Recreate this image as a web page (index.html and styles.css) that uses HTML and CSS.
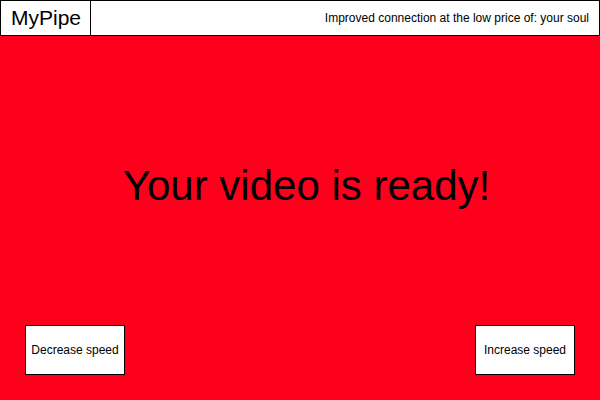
FILE: index.html
```html
<!DOCTYPE html>
<html>
<head>
<meta charset="utf-8">
<link rel="stylesheet" href="styles.css">
</head>
<body>
<div class="page">
  <header class="header">
    <div class="logo">MyPipe</div>
    <div class="tagline">Improved connection at the low price of: your soul</div>
  </header>
  <main class="stage">
    <h1 class="headline">Your video is ready!</h1>
    <div class="controls">
      <button class="btn">Decrease speed</button>
      <button class="btn">Increase speed</button>
    </div>
  </main>
</div>
</body>
</html>
```
FILE: styles.css
```css
html, body {
  margin: 0;
  padding: 0;
}
body {
  font-family: "Liberation Sans", Arial, sans-serif;
  width: 600px;
  height: 400px;
  overflow: hidden;
}
.page {
  display: flex;
  flex-direction: column;
  height: 400px;
}
.header {
  display: flex;
  align-items: stretch;
  height: 36px;
  box-sizing: border-box;
  border: 1px solid #000;
  background: #fff;
}
.logo {
  width: 90px;
  box-sizing: border-box;
  border-right: 1px solid #000;
  padding-left: 10px;
  font-size: 21px;
  color: #000;
  display: flex;
  align-items: center;
}
.tagline {
  flex: 1;
  display: flex;
  align-items: center;
  justify-content: flex-end;
  padding-right: 10px;
  font-size: 12px;
  color: #000;
}
.stage {
  flex: 1;
  background: #fe001c;
  display: flex;
  flex-direction: column;
  padding: 0 25px 25px;
}
.headline {
  margin: 126px 0 0;
  padding-left: 13px;
  font-weight: normal;
  font-size: 42px;
  line-height: 48px;
  text-align: center;
  color: #000;
}
.controls {
  margin-top: auto;
  display: flex;
  justify-content: space-between;
}
.btn {
  width: 100px;
  height: 50px;
  box-sizing: border-box;
  border: 1px solid #000;
  background: #fff;
  font-family: "Liberation Sans", Arial, sans-serif;
  font-size: 12px;
  color: #000;
  padding: 0;
}
```
